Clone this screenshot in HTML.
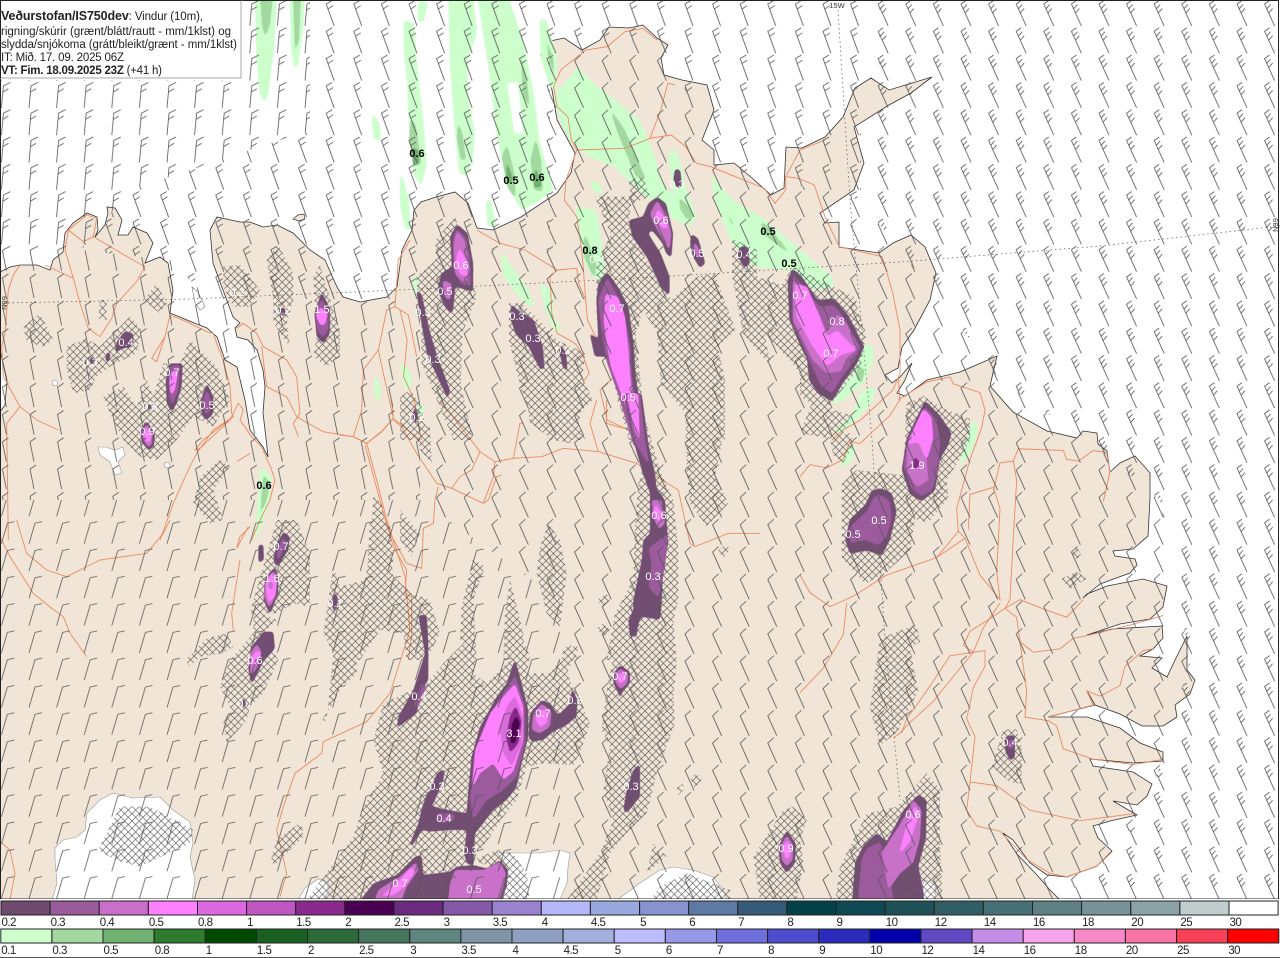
<!DOCTYPE html>
<html lang="is"><head><meta charset="utf-8"><title>Veðurstofan</title>
<style>
html,body{margin:0;padding:0;background:#fff}
svg{display:block}
.rd polyline{fill:none;stroke:#e98a62;stroke-width:.9;vector-effect:non-scaling-stroke}
.c1{fill:#724e73}.c2{fill:#9c5b9d}.c3{fill:#c971c9}.c4{fill:#fd80fe}.c5{fill:#dc6bdd}.c6{fill:#bf59bf}.c7{fill:#8a278a}.c8{fill:#4b004f}
.g1{fill:#ccffcc}.g2{fill:#a3d9a0}.g3{fill:#70b070}
.s polygon{filter:url(#s3)}
polygon.s1{filter:url(#s1)}
.l{font:11px "Liberation Sans",sans-serif;fill:#fff;text-anchor:middle}
.k{font:bold 11px "Liberation Sans",sans-serif;fill:#000;text-anchor:middle}
.t{font:11.5px "Liberation Sans",sans-serif;fill:#222}
.lg{font:11.5px "Liberation Sans",sans-serif;fill:#222;letter-spacing:-.5px}
.b{fill:none;stroke:#555;stroke-width:.8}
.lr rect{stroke:#222;stroke-width:1}
</style></head><body>
<svg width="1280" height="958" viewBox="0 0 1280 958" xmlns="http://www.w3.org/2000/svg">
<defs>
<filter id="s3" x="-40%" y="-40%" width="180%" height="180%" color-interpolation-filters="sRGB"><feGaussianBlur stdDeviation="5"/><feComponentTransfer><feFuncA type="linear" slope="4" intercept="-1.5"/></feComponentTransfer></filter>
<filter id="s1" x="-40%" y="-40%" width="180%" height="180%" color-interpolation-filters="sRGB"><feGaussianBlur stdDeviation="1.6"/><feComponentTransfer><feFuncA type="linear" slope="4" intercept="-1.5"/></feComponentTransfer></filter>
<pattern id="h" patternUnits="userSpaceOnUse" width="7.33" height="7.33"><path d="M0 0L7.33 7.33M7.33 0L0 7.33" stroke="#444" stroke-width=".6" fill="none"/></pattern>
<pattern id="p1" patternUnits="userSpaceOnUse" x=".4" y="0" width="27.6" height="27.3"><path class="b" d="M1 26L3 4L10 .5M2.7 10L8 6.8"/></pattern>
<pattern id="p2" patternUnits="userSpaceOnUse" x="-8" y="0" width="27.6" height="27.3"><path class="b" d="M11 26L3 4L9 .5M4.8 9L10 5.5"/></pattern>
<pattern id="p3" patternUnits="userSpaceOnUse" x="-8" y="0" width="27.6" height="27.3"><path class="b" d="M12 26L3 6L9 .5"/></pattern>
<pattern id="p4" patternUnits="userSpaceOnUse" x="-8" y="0" width="27.6" height="27.3"><path class="b" d="M13 26L3 4L8 .5M5 9L9 4.5M7 13L11 8.5"/></pattern>
<pattern id="p5" patternUnits="userSpaceOnUse" x=".4" y="0" width="27.6" height="27.3"><path class="b" d="M1 25L7 4.5L14 3"/></pattern>
<pattern id="p6" patternUnits="userSpaceOnUse" x=".4" y="0" width="27.6" height="27.3"><path class="b" d="M6 25L2 5L8 1"/></pattern>
<mask id="hm" maskUnits="userSpaceOnUse" x="0" y="0" width="1280" height="900">
<g fill="#fff">
<g transform="translate(0,200) scale(.33333)">
<polygon points="300,300 320,300 320,360 295,355"/>
<polygon points="70,380 120,340 160,420 130,440 80,425"/>
<polygon points="200,440 260,415 300,440 340,400 390,350 425,390 410,460 330,500 290,530 270,570 220,580 200,510"/>
<polygon points="430,300 470,250 500,310 480,340"/>
<polygon points="310,590 370,560 410,620 440,540 460,590 490,490 540,490 570,420 650,500 690,600 640,680 580,650 530,720 470,780 420,770 370,720 330,640"/>
<polygon points="660,780 690,800 640,870 670,960 630,970 580,910 600,830"/>
<polygon points="670,200 720,195 780,270 750,320 700,320 670,260"/>
<polygon points="800,180 835,135 880,220 880,300 860,370 870,440 820,370 820,300"/>
<polygon points="940,230 960,195 1020,400 1020,470 980,500 940,470 950,410"/>
</g>
<g transform="translate(400,0) scale(.35714,.33333)">
<polygon points="45,830 100,780 100,720 155,650 215,890 175,1000 170,1150 205,1320 150,1320 60,1090 60,980"/>
<polygon points="0,1190 30,1170 60,1220 80,1320 0,1320"/>
<polygon points="305,910 340,910 380,950 440,1020 520,1060 510,1130 540,1200 490,1250 520,1320 420,1320 380,1260 350,1200 330,1130 305,1020"/>
<polygon points="545,590 650,590 640,670 690,780 760,900 830,830 880,820 940,990 890,1040 910,1140 910,1320 800,1320 800,1240 730,1150 720,1000 680,930 660,1000 690,1320 640,1320 590,1110 550,950 550,800 590,700"/>
<polygon points="640,540 680,530 700,590 650,610"/>
<polygon points="1100,800 1270,890 1305,1000 1290,1100 1200,1220 1260,1260 1230,1320 1120,1300 1160,1190 1100,1090 1020,1000 1060,870"/>
<polygon points="930,715 1000,750 1000,830 1080,860 1020,1000 1040,1100 990,1040 960,1000 930,830"/>
</g>
<g transform="translate(0,520) scale(.33333)">
<polygon points="555,420 620,355 680,340 700,380 670,400 600,410 570,440"/>
<polygon points="660,500 690,420 760,340 760,270 830,300 790,340 835,420 790,520 750,560 740,600 680,670 670,600 695,570"/>
<polygon points="750,280 760,240 830,0 890,0 930,100 930,260 880,250 830,280"/>
<polygon points="980,600 1000,400 970,340 1000,140 1040,260 1060,320 1065,400 1040,470 1010,530 960,610"/>
<polygon points="1050,200 1100,190 1110,0 1170,10 1180,120 1130,300 1060,370"/>
<polygon points="920,1140 1000,1030 1060,950 1110,840 1180,760 1320,760 1320,1140"/>
<polygon points="810,1030 830,960 905,905 910,950 860,1000 830,1030"/>
<polygon points="295,990 360,860 450,860 580,930 570,970 420,1040 345,1020"/>
</g>
<g transform="translate(800,340) scale(.33333,.35088)">
<polygon points="0,60 30,140 80,180 60,200 0,160"/>
<polygon points="65,220 100,200 155,215 125,260 70,240"/>
<polygon points="90,280 150,265 160,300 130,350 100,330"/>
<polygon points="125,410 170,370 310,385 320,180 370,160 430,195 510,225 510,290 440,400 445,450 385,520 345,510 330,600 260,660 195,695 125,620"/>
<polygon points="240,850 350,810 360,860 330,880 355,1000 290,1120 240,1155 210,1050"/>
<polygon points="575,1215 610,1110 650,1110 665,1160 665,1265 630,1260"/>
<polygon points="100,1640 120,1500 200,1350 290,1330 380,1235 420,1280 420,1440 430,1640"/>
<polygon points="785,680 830,660 860,680 810,710"/>
<polygon points="815,610 830,590 845,615 830,625"/>
</g>
<g transform="translate(340,400) scale(.33333)">
<polygon points="300,0 365,0 365,60 350,105 320,70"/>
<polygon points="220,70 270,80 275,190 240,150"/>
<polygon points="560,0 730,0 720,50 690,130 640,120 570,70"/>
<polygon points="830,0 900,0 940,140 960,210 1000,300 1015,450 1015,600 1000,660 1010,780 800,780 825,640 880,540 885,380 895,250 910,200 860,60"/>
<polygon points="1050,0 1130,0 1130,60 1145,130 1125,230 1165,310 1100,380 1050,310 1040,210 1040,70"/>
<polygon points="1135,450 1160,430 1170,450 1150,475"/>
<polygon points="100,290 125,310 150,450 160,530 215,580 270,600 300,700 260,780 200,780 190,700 120,690 60,780 0,780 0,560 75,540 90,460"/>
<polygon points="180,330 240,400 215,470 180,420"/>
<polygon points="400,475 435,500 400,600 410,780 360,720 365,620"/>
<polygon points="510,540 550,700 550,780 490,780 495,640"/>
<polygon points="625,370 660,420 680,520 660,680 620,640 590,520 600,440"/>
<polygon points="770,600 800,580 810,600 790,620"/>
<polygon points="770,685 790,670 810,690 790,710"/>
<polygon points="660,760 690,730 715,780"/>
</g>
<g transform="translate(340,640) scale(.33333)">
<polygon points="0,0 50,0 50,100 20,130 0,130"/>
<polygon points="130,190 260,130 310,70 380,0 410,40 400,100 440,130 510,60 550,0 570,50 560,100 630,100 690,20 720,20 680,100 750,250 720,340 700,375 610,370 560,380 530,480 490,530 430,620 350,700 250,700 140,660 40,590 70,500 130,400 100,300"/>
<polygon points="800,150 830,0 1000,0 1010,70 1000,170 1005,250 950,400 920,520 860,580 810,640 770,780 680,780 780,640 820,540 790,450 810,320 785,270"/>
<polygon points="1010,445 1030,430 1030,450 1015,465"/>
<polygon points="1050,410 1070,400 1085,420 1065,445"/>
<polygon points="1240,650 1330,510 1360,500 1400,540 1380,600 1390,660 1370,780 1260,780"/>
<polygon points="920,700 940,610 960,640 990,640"/>
<polygon points="400,660 470,630 520,640 560,700 570,780 480,780 500,700"/>
<polygon points="0,650 40,680 0,720"/>
<polygon points="960,740 1040,700 1170,750 1170,780 930,780"/>
</g>
</g>
</mask>
</defs>

<rect width="1280" height="958" fill="#fff"/>

<!-- land -->
<path fill="#f1e5d7" stroke="#333" stroke-width=".8" d="M0,272 10,267 20,265 37,265 50,270 53,260 63,252 65,233 73,223 87,213 97,217 98,230 95,237 105,225 108,213 107,207 115,208 122,220 118,235 128,235 133,227 147,233 153,243 145,263 160,257 168,263 173,290 170,313 187,320 207,328 217,337 225,360 237,367 245,400 250,430 263,447 268,457 267,447 263,413 265,387 263,370 257,350 248,340 237,337 235,328 240,323 233,317 213,263 210,230 217,217 240,222 250,222 263,227 277,225 293,233 310,250 325,260 337,287 343,297 360,302 387,297 397,287 402,250 412,230 414,210 421,202 436,197 455,192 468,203 477,228 493,230 521,217 557,193 571,173 575,153 568,140 557,120 552,90 541,55 546,42 564,38 582,50 600,40 609,27 629,28 643,25 657,38 668,45 661,58 664,75 682,80 707,85 714,110 702,140 714,150 714,165 734,163 752,178 771,195 784,188 786,147 802,148 825,137 843,117 855,88 871,78 889,90 932,77 911,93 889,105 854,127 864,163 854,190 820,213 825,223 839,222 839,247 879,253 893,243 911,235 925,247 936,273 930,300 914,330 902,347 898,368 885,375 892,383 900,377 912,363 905,380 897,393 905,396 927,380 960,372 997,356 990,386 1013,412 1047,431 1077,438 1083,431 1097,433 1098,444 1107,451 1110,472 1120,463 1135,456 1150,473 1150,498 1148,536 1133,549 1113,551 1115,556 1135,559 1137,565 1130,573 1100,584 1083,598 1087,594 1107,586 1143,579 1167,586 1163,607 1150,619 1120,624 1087,635 1112,629 1162,626 1163,638 1153,649 1140,656 1162,658 1152,668 1167,677 1177,656 1187,636 1187,670 1195,680 1190,694 1175,705 1177,717 1163,726 1142,726 1120,714 1095,705 1087,691 1095,705 1048,717 1087,717 1120,728 1140,743 1163,752 1163,761 1133,763 1090,759 1093,766 1133,772 1152,784 1147,796 1137,805 1113,801 1137,815 1110,821 1093,826 1098,838 1112,851 1097,866 1067,877 1047,875 1030,863 1013,840 1003,833 1017,854 1037,875 1050,890 1060,900 0,900 0,412 5,405 7,380 0,350Z"/>
<path fill="#f1e5d7" stroke="#333" stroke-width=".7" d="M293,219 298,215 304,214 305,219 299,221Z"/>
<path fill="#f1e5d7" stroke="#333" stroke-width=".7" d="M261,29 266,34 270,43 265,45 260,38Z"/>
<path fill="#fff" stroke="#777" stroke-width=".6" d="M192,287 198,292 205,307 200,310 195,303Z"/>

<!-- glaciers and lakes -->
<g fill="#fff" stroke="#999" stroke-width=".6">
<path d="M52,900 57,883 55,860 55,848 63,840 77,837 85,830 87,813 100,800 113,793 133,798 160,797 173,810 190,822 193,843 190,857 195,880 192,900Z"/>
<path d="M298,900 305,888 318,879 328,882 328,893 322,900Z"/>
<path d="M503,900 508,867 497,853 523,853 540,853 560,850 570,853 568,867 567,883 560,900Z"/>
<path d="M617,900 640,883 660,870 673,867 693,870 713,877 723,890 727,900Z"/>
<path d="M915,900 925,880 935,885 935,900Z"/>
<path d="M98,447 105,447 115,450 123,447 125,455 118,462 122,473 115,475 110,462 100,455Z"/>
<circle cx="55" cy="383" r="2.8"/><circle cx="167" cy="465" r="2.8"/>
</g>

<!-- green, sea and land streaks -->
<g transform="translate(400,0) scale(.35714,.33333)">
<g class="g1 s">
<polygon points="10,60 40,70 45,160 65,360 75,490 60,560 40,530 25,380 20,250 10,150"/>
<polygon points="50,5 80,5 65,70 50,60"/>
<polygon points="0,500 25,600 30,690 15,690 0,620"/>
<polygon points="135,-20 205,-20 215,100 190,180 190,280 210,400 205,470 190,530 165,520 150,350 140,200"/>
<polygon points="215,-20 300,-20 345,120 375,280 390,420 430,570 380,610 340,630 300,560 270,400 250,220"/>
<polygon points="370,420 395,480 405,570 385,590 365,540 355,450"/>
<polygon points="390,55 410,60 440,170 440,280 420,260 395,180"/>
<polygon points="240,600 255,600 270,680 245,680"/>
<polygon points="430,290 500,200 540,250 590,290 670,360 700,430 740,560 830,640 810,680 770,660 740,620 690,590 600,500 530,470 480,430 450,370"/>
<polygon points="750,460 775,450 800,560 830,650 810,680 770,610"/>
<polygon points="870,520 930,600 1010,650 1100,730 1210,830 1215,860 1160,870 1090,810 990,800 930,730 880,600"/>
<polygon points="490,620 550,630 575,800 560,850 520,800 500,700"/>
<polygon points="530,540 560,550 570,590 540,570"/>
<polygon points="280,750 360,870 380,930 340,900 290,830"/>
<polygon points="390,850 425,870 430,950 460,1000 430,990 405,920"/>
<polygon points="0,1080 30,1130 20,1190 5,1130"/>
<polygon points="50,1210 70,1220 50,1270"/>
</g>
<polygon fill="#fff" points="300,250 330,245 345,400 320,400"/>
<g class="g2 s">
<polygon points="30,350 45,380 60,490 40,500 25,420"/>
<polygon points="160,360 175,400 185,480 170,480 160,420"/>
<polygon points="335,130 355,240 365,330 345,290"/>
<polygon points="300,430 320,520 325,600 300,560 285,470"/>
<polygon points="380,410 395,480 400,575 375,570 365,480"/>
<polygon points="405,95 430,180 435,250 415,170"/>
<polygon points="585,320 630,390 690,540 660,530 610,400"/>
<polygon points="780,590 810,620 825,650 805,660 785,630"/>
<polygon points="910,620 940,680 925,670"/>
<polygon points="1010,660 1040,690 1100,770 1050,730 1015,700"/>
<polygon points="515,690 550,790 545,840 515,770"/>
</g>
<g class="g3 s">
<polygon points="295,470 318,540 300,555"/>
<polygon points="378,490 398,560 375,565"/>
<polygon points="32,440 52,450 54,495 36,495"/>
</g>
</g>
<g>
<polygon class="g1 s1" points="255,-5 277,-5 274,50 268,95 264,103 259,90 256,50"/>
<polygon class="g2 s1" points="260,-5 273,-5 270,25 265,38 262,25"/>
<polygon class="g1 s1" points="290,-5 305,-5 303,30 298,65 295,70 291,50"/>
<polygon class="g2 s1" points="293,-5 301,-5 299,40 295,55"/>
<polygon class="g1 s1" points="373,112 380,125 381,140 374,140 372,125"/>
</g>
<g transform="translate(0,200) scale(.33333)" class="g1 s">
<polygon points="1120,510 1140,560 1140,620 1125,590"/>
<polygon points="1210,480 1235,530 1230,580 1205,530"/>
<polygon points="780,800 815,830 810,900 775,1000 760,1020 770,950"/>
<polygon points="1240,225 1255,230 1250,300 1240,280"/>
</g>
<g transform="translate(0,200) scale(.33333)" class="g2 s"><polygon points="790,820 810,850 800,900 780,950 785,880"/></g>
<g transform="translate(800,340) scale(.33333,.35088)">
<g class="g1 s">
<polygon points="195,10 220,20 220,60 190,125 130,170 90,190 130,130 165,90"/>
<polygon points="190,140 228,135 215,180 170,225 125,265 95,265 150,220"/>
<polygon points="150,300 170,305 150,350 115,365"/>
<polygon points="515,230 535,245 520,310 475,365 490,310"/>
</g>
<g class="g2 s"><polygon points="170,70 195,85 185,125 170,110"/></g>
</g>
<g transform="translate(0,520) scale(.33333)" class="g1 s"><polygon points="750,120 790,0 800,0 770,60"/></g>

<!-- grid -->
<g fill="none" stroke="#555" stroke-width=".7" stroke-dasharray="1.5 3">
<path d="M8,303 190,299 400,290 640,278 900,262 1100,246 1280,226"/>
<path d="M838,10 850,200 872,440 885,640 900,800"/>
</g>
<text x="837" y="8" font-family="Liberation Sans,sans-serif" font-size="7.5" fill="#333" text-anchor="middle">15W</text>
<text transform="translate(7,303) rotate(-90)" font-family="Liberation Sans,sans-serif" font-size="7.5" fill="#333" text-anchor="middle">N99</text>
<text transform="translate(1278,225) rotate(-90)" font-family="Liberation Sans,sans-serif" font-size="7.5" fill="#333" text-anchor="middle">N99</text>

<!-- roads -->
<g class="rd">
<g transform="translate(0,200) scale(.33333)">
<polyline points="60,195 40,225 25,270 15,400 5,440 10,530 60,620 20,670 25,1020"/>
<polyline points="60,620 110,660 175,690"/>
<polyline points="135,195 220,235 240,310 265,385 300,410 335,355 350,310 410,245 435,200 390,175 280,110 250,125 205,90 195,150 220,235"/>
<polyline points="205,90 260,45 290,55 280,110"/>
<polyline points="510,345 495,410 470,485 455,475 495,410"/>
<polyline points="510,345 560,365 620,395 640,400 650,430 670,480 690,560 695,640 700,650 610,720 585,750 600,745 690,660 715,610 730,630 720,660 755,710 785,740"/>
<polyline points="700,650 640,690 590,760 560,820 520,910 480,1020"/>
<polyline points="785,740 815,810 825,840 810,900 780,960 755,1020"/>
<polyline points="710,785 750,760"/>
<polyline points="710,385 730,370 770,400 790,440 860,480 890,530 900,640 880,670 895,710"/>
<polyline points="785,440 800,560 860,590 890,650 915,665 970,695 1060,710 1100,730 1140,700 1180,655 1150,520 1135,450 1090,510 1085,630 1060,710"/>
<polyline points="1135,450 1160,330 1185,320 1225,345 1250,470"/>
<polyline points="1180,655 1260,720"/>
<polyline points="1185,320 1195,180 1230,120"/>
</g>
<g transform="translate(400,0) scale(.35714,.33333)">
<polyline points="430,260 450,210 520,150 580,140 630,95 680,85 720,120"/>
<polyline points="430,260 440,320 470,350 480,420 495,450 630,445 700,415 760,405 800,440 830,490 870,500 950,535 1020,565 1050,610 1080,570 1080,530 1115,535 1160,555 1190,650 1230,740 1350,770 1380,880 1400,990 1400,1120 1380,1170 1290,1260 1240,1290 1210,1320"/>
<polyline points="495,450 465,540 460,600 495,650 510,760 520,900 525,960 570,1060 600,1130 560,1170 580,1260 640,1290"/>
<polyline points="700,415 730,330 750,250 770,255"/>
<polyline points="1080,530 1120,450 1190,420"/>
<polyline points="215,690 280,730 350,750 440,810 495,805 500,850 520,900"/>
<polyline points="440,810 420,830 425,940 440,1000 490,1030 510,1060 530,1120 510,1150"/>
<polyline points="0,930 20,1020 10,1130 40,1200 60,1320"/>
</g>
<g transform="translate(340,400) scale(.33333)">
<polyline points="0,105 40,110 80,130 130,90 160,55 155,0"/>
<polyline points="160,60 185,80 230,160 290,250 335,265 430,310 445,300 470,230 485,225"/>
<polyline points="80,130 110,240 150,400 200,490 245,505 250,385 280,370 285,300 295,260"/>
<polyline points="75,135 125,320 160,440 200,510 195,580 215,590 215,700 205,780"/>
<polyline points="300,0 420,155 465,185 460,230 430,310"/>
<polyline points="420,155 395,210 360,230 335,265"/>
<polyline points="465,185 520,175 605,170 670,145 775,155 890,190 950,230 1015,270 1050,430 1065,440 1165,400 1260,400"/>
<polyline points="520,175 540,70 550,70"/>
<polyline points="775,155 750,70 770,0"/>
<polyline points="800,0 800,70 850,85"/>
</g>
<g transform="translate(800,340) scale(.33333,.35088)">
<polyline points="295,110 300,170 270,215 180,295 150,290 130,340 80,365 30,355 0,390"/>
<polyline points="295,170 380,120 450,105 460,125 540,150 555,200 545,250 510,340 490,410 470,480 475,545 410,620 260,670 160,730 90,760 30,720 0,670"/>
<polyline points="475,545 495,565 410,620"/>
<polyline points="495,565 540,670 600,740 590,660 600,480 580,420 510,440 505,540"/>
<polyline points="580,430 600,350 640,345 650,400 640,560 630,740 615,765"/>
<polyline points="640,345 655,310 790,315 800,340 835,345 880,315 920,320 930,375 910,460"/>
<polyline points="615,765 660,740 740,770 800,790 850,740"/>
<polyline points="615,765 560,800 510,830 490,870 520,890 555,885 555,930 520,990 500,1080 525,1130 510,1260 500,1340 530,1385 600,1400 680,1480 750,1520 800,1530 890,1500 935,1460"/>
<polyline points="600,750 550,820 520,890 450,970 400,1030 330,1090 300,1120 280,1135"/>
<polyline points="520,890 450,900 380,1000 320,1080 305,1120"/>
<polyline points="615,765 650,790 660,860 680,1000 675,1075 745,1085 770,1100 790,1165 880,1195 1000,1210 1090,1195"/>
<polyline points="660,860 700,890 780,880 820,850 850,845 1000,810 1090,785"/>
<polyline points="745,1075 880,1040 860,1000 900,1015 960,985 975,930 1030,885 1060,880"/>
<polyline points="510,1260 590,1270 690,1340 840,1370 1000,1350"/>
<polyline points="140,750 130,840 70,935 0,1005"/>
</g>
<g transform="translate(0,520) scale(.33333)">
<polyline points="0,50 30,110 100,220 155,265 190,290 210,340 260,410"/>
<polyline points="50,0 80,100 140,150 200,170 300,120 440,100 490,40 510,0"/>
<polyline points="0,965 30,990 45,1060 30,1140"/>
<polyline points="750,20 720,50 710,85 745,20"/>
<polyline points="720,120 695,280 700,330"/>
<polyline points="1100,605 970,665 965,700 885,760 850,860 830,930 860,1060 840,1130"/>
<polyline points="1100,605 1170,520 1230,330 1215,170 1160,0"/>
</g>
</g>

<!-- hatching -->
<rect x="0" y="0" width="1280" height="900" fill="url(#h)" mask="url(#hm)"/>

<!-- purple -->
<g transform="translate(400,0) scale(.35714,.33333)" class="s">
<polygon class="c1" points="160,672 190,700 205,790 205,875 185,870 155,860 150,920 145,945 125,920 105,870 115,820 145,800 140,710"/>
<polygon class="c2" points="158,685 185,715 198,790 198,860 170,850 150,810 148,720"/>
<polygon class="c3" points="158,690 180,720 195,800 185,850 155,825 150,740"/>
<polygon class="c4" points="165,740 185,780 190,830 170,825 155,790"/>
<polygon class="c3" points="118,840 145,850 140,905 125,890"/>
<polygon class="c1" points="45,870 60,880 85,1000 105,1070 140,1170 135,1200 100,1120 75,1060 60,970"/>
<polygon class="c1" points="310,910 330,930 375,960 400,1040 405,1110 390,1105 360,1040 325,1005 310,960"/>
<polygon class="c1" points="450,1030 465,1060 470,1120 455,1100 445,1050"/>
<polygon class="c1" points="40,1210 50,1240 48,1275 35,1260"/>
<polygon class="c1" points="580,815 610,860 640,920 655,1040 660,1130 680,1260 690,1340 660,1340 620,1200 590,1110 575,1070 545,1070 530,995 555,1020 550,900 555,850"/>
<polygon class="c2" points="580,830 625,920 645,1040 650,1130 675,1340 655,1340 610,1180 580,1090 565,1000 555,900"/>
<polygon class="c4" points="575,880 610,890 630,950 640,1050 645,1130 660,1260 670,1300 662,1300 615,1170 590,1100 580,1040 570,960"/>
<polygon class="c1" points="720,590 745,610 765,700 760,775 745,760 735,730 705,690 695,700 730,760 755,830 755,890 730,860 690,770 650,710 640,660 680,650 695,610"/>
<polygon class="c3" points="720,600 745,640 760,700 755,755 735,715 710,670 700,640"/>
<polygon class="c4" points="720,625 740,650 752,690 730,680 715,650"/>
<polygon class="c1" points="770,505 785,510 790,560 775,565 765,540"/>
<polygon class="c1" points="815,700 835,715 855,790 840,805 820,770 812,730"/>
<polygon class="c3" points="820,720 835,740 845,785 825,760"/>
<polygon class="c1" points="950,740 975,740 980,790 965,805 945,770"/>
<polygon class="c1" points="1100,805 1125,830 1170,900 1215,895 1255,945 1300,1040 1280,1090 1240,1150 1210,1205 1170,1180 1145,1140 1140,1080 1090,960 1085,840"/>
<polygon class="c2" points="1100,820 1175,920 1215,915 1245,955 1290,1045 1270,1085 1235,1135 1210,1180 1180,1160 1150,1090 1100,970"/>
<polygon class="c3" points="1100,835 1170,930 1195,1000 1225,940 1250,970 1285,1045 1250,1075 1235,1115 1195,1120 1155,1080 1100,960"/>
<polygon class="c4" points="1105,850 1140,860 1175,950 1195,1010 1225,990 1250,1020 1280,1050 1235,1065 1195,1100 1150,1030 1110,950"/>
</g>
<g transform="translate(340,400) scale(.33333)" class="s">
<polygon class="c1" points="850,-20 905,-20 925,130 945,220 950,265 975,300 985,430 970,500 965,610 960,660 905,650 895,670 890,710 870,710 865,660 880,630 880,600 905,480 910,420 930,400 930,280 905,210 880,120"/>
<polygon class="c2" points="855,-20 900,-20 915,120 930,200 885,130"/>
<polygon class="c4" points="860,-20 895,-20 900,130 880,80"/>
<polygon class="c2" points="925,445 985,400 975,500 955,595 925,560 935,490"/>
<polygon class="c3" points="935,300 965,300 975,370 955,390 940,350"/>
<polygon class="c4" points="945,310 965,340 955,370 940,340"/>
</g>
<g transform="translate(800,340) scale(.33333,.35088)" class="s">
<polygon class="c1" points="375,172 420,215 455,265 445,300 420,340 405,430 365,460 330,440 305,370 320,280"/>
<polygon class="c2" points="375,190 410,225 420,290 415,370 395,430 365,445 335,425 310,360 325,280"/>
<polygon class="c3" points="350,280 375,280 385,400 350,420 320,375 320,300"/>
<polygon class="c4" points="370,195 395,220 400,280 380,345 355,290 320,300 345,245"/>
<polygon class="c7" points="345,330 360,350 350,370 335,360"/>
<polygon class="c1" points="240,422 275,435 290,490 270,570 245,615 200,600 150,610 135,570 150,510 195,470 215,430"/>
<polygon class="c2" points="240,440 270,460 275,510 260,560 235,585 195,570 150,580 150,530 200,490 220,450"/>
<polygon class="c1" points="615,1130 645,1125 645,1190 630,1200 615,1170"/>
<polygon class="c2" points="620,1145 640,1135 640,1165 625,1165"/>
<polygon class="c1" points="355,1295 380,1310 378,1420 355,1500 370,1568 380,1680 150,1680 165,1490 190,1440 230,1405 260,1430 310,1340"/>
<polygon class="c2" points="200,1450 240,1430 255,1470 300,1680 165,1680 185,1480"/>
<polygon class="c3" points="340,1310 365,1340 360,1420 340,1490 300,1520 265,1568 245,1460 300,1380"/>
<polygon class="c4" points="345,1325 358,1350 330,1430 295,1470 320,1380"/>
</g>
<g transform="translate(0,200) scale(.33333)" class="s">
<polygon class="c1" points="375,393 400,400 400,440 370,445 345,458 350,425"/>
<polygon class="c1" points="320,455 332,460 328,485 315,485"/>
<polygon class="c1" points="265,515 275,520 270,530 262,525"/>
<polygon class="c1" points="268,472 285,472 285,492 270,492"/>
<polygon class="c1" points="510,490 548,490 545,560 530,610 515,638 500,610 497,540"/>
<polygon class="c2" points="507,500 540,495 535,570 515,620 505,590"/>
<polygon class="c4" points="512,515 535,510 525,570 512,590 508,550"/>
<polygon class="c1" points="620,548 640,590 640,640 620,662 605,645 603,600"/>
<polygon class="c2" points="620,565 632,600 630,635 615,645 610,600"/>
<polygon class="c1" points="440,662 465,700 462,740 445,752 425,725 420,690"/>
<polygon class="c3" points="440,670 458,700 455,735 445,742 430,720 425,695"/>
<polygon class="c4" points="440,680 455,700 450,725 440,730 428,700"/>
<polygon class="c1" points="392,695 400,700 392,708 387,702"/>
<polygon class="c1" points="445,605 455,620 450,640 440,625"/>
<polygon class="c1" points="965,275 990,325 990,400 970,432 950,410 943,340"/>
<polygon class="c2" points="965,295 985,335 985,390 968,412 952,390 945,335"/>
<polygon class="c4" points="962,320 983,340 975,375 960,375 947,345"/>
<polygon class="c1" points="848,315 858,335 850,355 840,335"/>
<polygon class="c1" points="710,265 722,275 715,285"/>
</g>
<g transform="translate(0,520) scale(.33333)" class="s">
<polygon class="c1" points="850,35 870,50 865,90 840,130 825,140 820,110 835,65"/>
<polygon class="c2" points="850,50 860,70 845,105 830,125 832,85"/>
<polygon class="c1" points="825,140 835,170 835,220 810,285 790,240 795,175"/>
<polygon class="c3" points="822,150 832,180 828,225 808,265 792,230 797,180"/>
<polygon class="c4" points="815,155 830,185 825,230 805,250 797,195"/>
<polygon class="c3" points="813,178 822,195 812,215 803,195"/>
<polygon class="c1" points="775,75 790,72 792,120 775,130"/>
<polygon class="c1" points="790,335 820,335 825,385 790,425 755,495 745,450 755,380"/>
<polygon class="c3" points="770,370 785,395 770,445 750,470 752,400"/>
<polygon class="c4" points="770,390 785,400 770,430 752,435 757,410"/>
<polygon class="c1" points="725,535 735,535 738,560 728,570"/>
<polygon class="c1" points="1005,210 1015,240 1003,285 995,250"/>
<polygon class="c1" points="1255,285 1280,285 1285,370 1285,480 1265,510 1250,580 1190,625 1195,590 1240,510 1275,400"/>
<polygon class="c2" points="1265,490 1280,500 1255,560 1240,560"/>
</g>
<g transform="translate(340,780) scale(.33333)" class="s">
<polygon class="c1" points="265,30 290,45 270,75 300,85 380,100 390,0 520,0 500,40 470,70 430,130 405,160 400,260 380,250 372,220 380,150 330,150 270,155 245,150 215,200 208,195 235,130 245,85"/>
<polygon class="c2" points="290,100 340,100 345,120 300,130"/>
<polygon class="c1" points="30,400 100,310 170,285 225,230 245,225 250,285 330,275 350,260 400,255 440,265 480,240 505,270 500,320 470,400"/>
<polygon class="c3" points="345,270 430,270 480,245 498,280 490,320 465,400 320,400 330,310"/>
<polygon class="c3" points="90,400 115,330 185,285 230,245 235,270 200,320 170,400"/>
<polygon class="c4" points="120,350 170,310 215,260 225,275 195,320 160,345"/>
</g>
<g transform="translate(340,640) scale(.33333)" class="s">
<polygon class="c1" points="525,55 545,130 565,210 565,290 545,370 530,440 500,480 460,510 430,545 400,560 380,540 385,450 395,350 420,260 470,170 500,130"/>
<polygon class="c2" points="525,105 555,200 555,310 530,410 490,450 440,480 400,540 390,470 405,350 470,190"/>
<polygon class="c4" points="525,130 550,200 550,300 520,395 490,420 460,370 420,400 395,450 405,330 450,220 490,170"/>
<polygon class="c5" points="525,165 548,230 545,310 515,380 490,340 478,260 500,200"/>
<polygon class="c7" points="527,195 545,245 535,310 510,340 498,290 510,230"/>
<polygon class="c8" points="528,225 540,250 525,310 510,310 515,255"/>
<polygon class="c2" points="420,400 460,380 480,420 490,450 440,480 400,540 390,470"/>
<polygon class="c1" points="695,140 712,180 710,230 680,255 640,275 610,300 575,305 565,290 570,220 605,180 630,190 655,225 690,190"/>
<polygon class="c3" points="605,190 635,215 630,260 600,280 575,270 580,220"/>
<polygon class="c4" points="605,205 625,220 620,250 600,262 585,235"/>
<polygon class="c1" points="840,75 870,95 870,130 845,160 840,185 835,160 820,130 820,100"/>
<polygon class="c3" points="840,85 865,100 862,130 842,148 825,125 825,105"/>
<polygon class="c4" points="840,97 858,108 852,125 840,132 830,112"/>
<polygon class="c1" points="900,370 900,470 860,520 850,510 860,450 880,390"/>
<polygon class="c1" points="315,385 310,420 285,480 270,510 262,540 260,480 290,400"/>
<polygon class="c1" points="1340,570 1368,610 1365,670 1340,700 1320,670 1315,620"/>
<polygon class="c3" points="1340,585 1360,615 1358,660 1340,680 1325,660 1322,620"/>
<polygon class="c4" points="1340,598 1353,620 1350,650 1338,660 1328,625"/>
</g>

<!-- wind barbs -->
<polygon fill="url(#p1)" points="0,80 240,80 240,0 310,0 310,130 130,190 80,250 0,250"/>
<polygon fill="url(#p2)" points="130,190 310,130 310,0 880,0 880,75 860,130 860,200 710,165 670,40 550,40 550,250 420,250 420,300 210,300 170,260 80,250"/>
<polygon fill="url(#p3)" points="420,250 550,250 550,40 670,40 710,165 860,200 940,300 1000,380 1100,450 1160,500 1190,660 1170,730 1150,800 1110,860 1060,899 560,899 560,600 420,500"/>
<polygon fill="url(#p4)" points="880,0 1278,0 1278,899 1060,899 1110,860 1150,800 1170,730 1190,660 1160,500 1100,450 1000,380 940,300 860,200 860,130 880,75"/>
<polygon fill="url(#p5)" points="0,500 420,500 560,600 560,899 0,899"/>
<polygon fill="url(#p6)" points="0,250 80,250 170,260 210,300 420,300 420,500 0,500"/>

<!-- value labels -->
<g>
<text class="l" x="126" y="346">0.4</text><text class="l" x="172" y="376">0.7</text><text class="l" x="147" y="435">0.9</text><text class="l" x="207" y="409">0.5</text><text class="l" x="322" y="313">1.5</text><text class="l" x="461" y="269">0.6</text><text class="l" x="445" y="295">0.5</text><text class="l" x="423" y="316">0.3</text><text class="l" x="433" y="363">0.3</text><text class="l" x="517" y="320">0.3</text><text class="l" x="533" y="342">0.3</text><text class="l" x="563" y="354">0.2</text><text class="l" x="417" y="421">0.2</text><text class="l" x="661" y="224">0.6</text><text class="l" x="617" y="312">0.7</text><text class="l" x="628" y="401">0.5</text><text class="l" x="677" y="188">0.3</text><text class="l" x="697" y="257">0.5</text><text class="l" x="744" y="258">0.4</text><text class="l" x="800" y="299">0.7</text><text class="l" x="837" y="325">0.8</text><text class="l" x="831" y="357">0.7</text><text class="l" x="917" y="469">1.9</text><text class="l" x="879" y="524">0.5</text><text class="l" x="853" y="538">0.5</text><text class="l" x="659" y="519">0.6</text><text class="l" x="653" y="580">0.3</text><text class="l" x="281" y="550">0.7</text><text class="l" x="272" y="582">1.6</text><text class="l" x="255" y="664">0.6</text><text class="l" x="245" y="707">0.1</text><text class="l" x="335" y="607">0.1</text><text class="l" x="419" y="700">0.4</text><text class="l" x="514" y="737">3.1</text><text class="l" x="543" y="717">0.7</text><text class="l" x="575" y="704">0.3</text><text class="l" x="620" y="680">0.7</text><text class="l" x="631" y="790">0.3</text><text class="l" x="437" y="790">0.3</text><text class="l" x="444" y="822">0.4</text><text class="l" x="470" y="854">0.3</text><text class="l" x="474" y="893">0.5</text><text class="l" x="400" y="887">0.7</text><text class="l" x="786" y="852">0.9</text><text class="l" x="913" y="818">0.6</text><text class="l" x="1010" y="746">0.4</text><text class="l" x="597" y="263">0.4</text><text class="l" x="90" y="366">0.3</text><text class="l" x="237" y="296">0.2</text><text class="l" x="283" y="314">0.2</text><text class="l" x="150" y="410">0.3</text>
</g>
<text class="k" x="417" y="157">0.6</text><text class="k" x="511" y="184">0.5</text><text class="k" x="537" y="181">0.6</text><text class="k" x="590" y="254">0.8</text><text class="k" x="768" y="235">0.5</text><text class="k" x="789" y="267">0.5</text><text class="k" x="264" y="489">0.6</text>

<!-- frame -->
<rect x=".5" y=".5" width="1278" height="898.5" fill="none" stroke="#222" stroke-width="1"/>

<!-- title box -->
<rect x="0" y="0" width="241" height="78" fill="#fff"/>
<path d="M241 0V78H0" fill="none" stroke="#aaa"/>
<path d="M0 .5H241M.5 0V78" stroke="#222"/>
<text class="t" x="1" y="20" textLength="202"><tspan font-weight="bold" font-size="12.5">Veðurstofan/IS750dev</tspan>: Vindur (10m),</text>
<text class="t" x="1" y="35" textLength="230">rigning/skúrir (grænt/blátt/rautt - mm/1klst) og</text>
<text class="t" x="1" y="48" textLength="236">slydda/snjókoma (grátt/bleikt/grænt - mm/1klst)</text>
<text class="t" x="1" y="61" textLength="123">IT: Mið. 17. 09. 2025 06Z</text>
<text class="t" x="1" y="74" textLength="161"><tspan font-weight="bold">VT: Fim. 18.09.2025 23Z</tspan> (+41 h)</text>

<!-- legend -->
<rect x="0" y="899" width="1280" height="59" fill="#fff"/>
<g class="lr">
<rect x="1" y="901" width="49.1" height="14" fill="#6e4a6d"/><rect x="50.1" y="901" width="49.1" height="14" fill="#9b5a9c"/><rect x="99.2" y="901" width="49.1" height="14" fill="#c870c9"/><rect x="148.4" y="901" width="49.1" height="14" fill="#ff80ff"/><rect x="197.5" y="901" width="49.1" height="14" fill="#dc69df"/><rect x="246.6" y="901" width="49.1" height="14" fill="#c056c2"/><rect x="295.7" y="901" width="49.1" height="14" fill="#8b2a8d"/><rect x="344.8" y="901" width="49.1" height="14" fill="#4a0050"/><rect x="394" y="901" width="49.1" height="14" fill="#6a2a7d"/><rect x="443.1" y="901" width="49.1" height="14" fill="#8558a8"/><rect x="492.2" y="901" width="49.1" height="14" fill="#9a82cf"/><rect x="541.3" y="901" width="49.1" height="14" fill="#b4b8f8"/><rect x="590.4" y="901" width="49.1" height="14" fill="#9aa8e0"/><rect x="639.6" y="901" width="49.1" height="14" fill="#8793cf"/><rect x="688.7" y="901" width="49.1" height="14" fill="#5f79a5"/><rect x="737.8" y="901" width="49.1" height="14" fill="#355a7a"/><rect x="786.9" y="901" width="49.1" height="14" fill="#034048"/><rect x="836" y="901" width="49.1" height="14" fill="#0f4852"/><rect x="885.2" y="901" width="49.1" height="14" fill="#1f5058"/><rect x="934.3" y="901" width="49.1" height="14" fill="#2f5e64"/><rect x="983.4" y="901" width="49.1" height="14" fill="#457176"/><rect x="1032.5" y="901" width="49.1" height="14" fill="#5e8084"/><rect x="1081.6" y="901" width="49.1" height="14" fill="#779298"/><rect x="1130.8" y="901" width="49.1" height="14" fill="#8ba3a6"/><rect x="1179.9" y="901" width="49.1" height="14" fill="#c0ced0"/><rect x="1229" y="901" width="49.1" height="14" fill="#ffffff"/>
<rect x=".8" y="929" width="51.1" height="14" fill="#ccffcc"/><rect x="51.9" y="929" width="51.1" height="14" fill="#a3d9a0"/><rect x="103" y="929" width="51.1" height="14" fill="#70b070"/><rect x="154.2" y="929" width="51.1" height="14" fill="#2e7b2e"/><rect x="205.3" y="929" width="51.1" height="14" fill="#004a00"/><rect x="256.4" y="929" width="51.1" height="14" fill="#1a5f22"/><rect x="307.5" y="929" width="51.1" height="14" fill="#2c6a3a"/><rect x="358.6" y="929" width="51.1" height="14" fill="#45775f"/><rect x="409.8" y="929" width="51.1" height="14" fill="#5f8780"/><rect x="460.9" y="929" width="51.1" height="14" fill="#7d95a5"/><rect x="512" y="929" width="51.1" height="14" fill="#8da0bf"/><rect x="563.1" y="929" width="51.1" height="14" fill="#a4b0dc"/><rect x="614.2" y="929" width="51.1" height="14" fill="#bcbcff"/><rect x="665.4" y="929" width="51.1" height="14" fill="#9898e8"/><rect x="716.5" y="929" width="51.1" height="14" fill="#7070dc"/><rect x="767.6" y="929" width="51.1" height="14" fill="#4c4ccc"/><rect x="818.7" y="929" width="51.1" height="14" fill="#2a2abc"/><rect x="869.8" y="929" width="51.1" height="14" fill="#0000aa"/><rect x="921" y="929" width="51.1" height="14" fill="#6048c4"/><rect x="972.1" y="929" width="51.1" height="14" fill="#c48ee8"/><rect x="1023.2" y="929" width="51.1" height="14" fill="#f4a4ec"/><rect x="1074.3" y="929" width="51.1" height="14" fill="#f888c8"/><rect x="1125.4" y="929" width="51.1" height="14" fill="#f874a4"/><rect x="1176.6" y="929" width="51.1" height="14" fill="#f84058"/><rect x="1227.7" y="929" width="51.1" height="14" fill="#ff0000"/>
</g>
<g>
<text class="lg" x="1.5" y="926">0.2</text><text class="lg" x="50.6" y="926">0.3</text><text class="lg" x="99.7" y="926">0.4</text><text class="lg" x="148.9" y="926">0.5</text><text class="lg" x="198" y="926">0.8</text><text class="lg" x="247.1" y="926">1</text><text class="lg" x="296.2" y="926">1.5</text><text class="lg" x="345.3" y="926">2</text><text class="lg" x="394.5" y="926">2.5</text><text class="lg" x="443.6" y="926">3</text><text class="lg" x="492.7" y="926">3.5</text><text class="lg" x="541.8" y="926">4</text><text class="lg" x="590.9" y="926">4.5</text><text class="lg" x="640.1" y="926">5</text><text class="lg" x="689.2" y="926">6</text><text class="lg" x="738.3" y="926">7</text><text class="lg" x="787.4" y="926">8</text><text class="lg" x="836.5" y="926">9</text><text class="lg" x="885.7" y="926">10</text><text class="lg" x="934.8" y="926">12</text><text class="lg" x="983.9" y="926">14</text><text class="lg" x="1033" y="926">16</text><text class="lg" x="1082.1" y="926">18</text><text class="lg" x="1131.3" y="926">20</text><text class="lg" x="1180.4" y="926">25</text><text class="lg" x="1229.5" y="926">30</text>
<text class="lg" x="1.3" y="954">0.1</text><text class="lg" x="52.4" y="954">0.3</text><text class="lg" x="103.5" y="954">0.5</text><text class="lg" x="154.7" y="954">0.8</text><text class="lg" x="205.8" y="954">1</text><text class="lg" x="256.9" y="954">1.5</text><text class="lg" x="308" y="954">2</text><text class="lg" x="359.1" y="954">2.5</text><text class="lg" x="410.3" y="954">3</text><text class="lg" x="461.4" y="954">3.5</text><text class="lg" x="512.5" y="954">4</text><text class="lg" x="563.6" y="954">4.5</text><text class="lg" x="614.7" y="954">5</text><text class="lg" x="665.9" y="954">6</text><text class="lg" x="717" y="954">7</text><text class="lg" x="768.1" y="954">8</text><text class="lg" x="819.2" y="954">9</text><text class="lg" x="870.3" y="954">10</text><text class="lg" x="921.5" y="954">12</text><text class="lg" x="972.6" y="954">14</text><text class="lg" x="1023.7" y="954">16</text><text class="lg" x="1074.8" y="954">18</text><text class="lg" x="1125.9" y="954">20</text><text class="lg" x="1177.1" y="954">25</text><text class="lg" x="1228.2" y="954">30</text>
</g>
<rect x="0" y="957" width="1280" height="1" fill="#555"/>
</svg>
</body></html>
